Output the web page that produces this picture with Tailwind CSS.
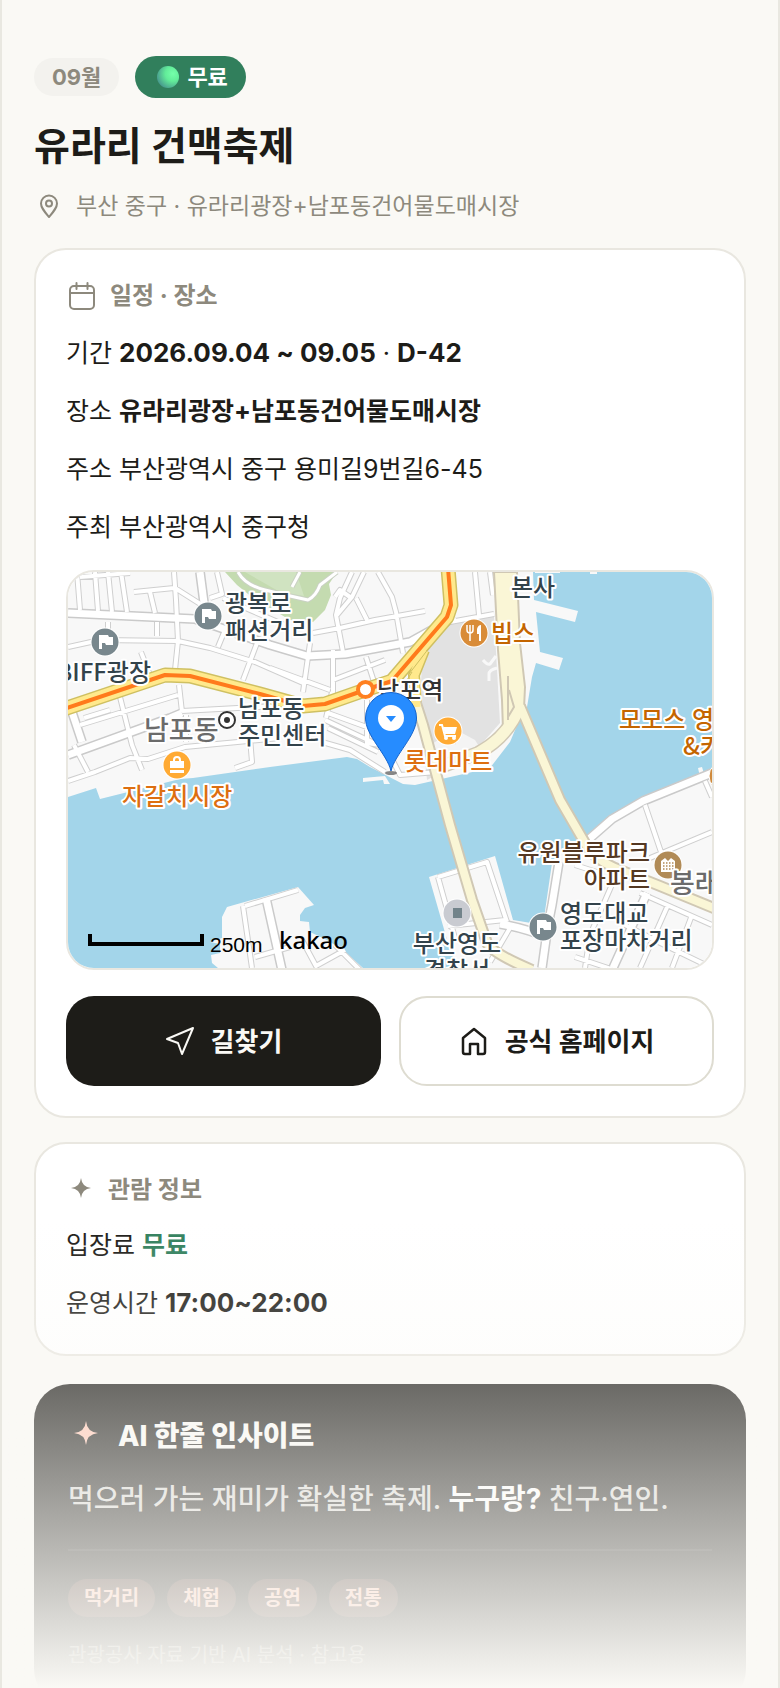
<!DOCTYPE html>
<html lang="ko">
<head>
<meta charset="utf-8">
<meta name="viewport" content="width=device-width, initial-scale=1">
<title>유라리 건맥축제</title>
<script src="https://cdn.jsdelivr.net/npm/@tailwindcss/browser@4"></script>
</head>
<body class="bg-[#faf9f5] font-['Inter','Noto_Sans_CJK_KR',sans-serif] text-[#1d1c18]">
<main class="relative h-screen overflow-hidden border-x-2 border-[#e9e8e1] px-8 pt-14">

  <header>
    <div class="flex items-center gap-4">
      <span class="flex h-[38px] items-center rounded-full bg-[#f3f2ee] px-[18px] text-[22px] font-bold text-[#8d897d]">09월</span>
      <span class="flex h-[42px] items-center gap-2 rounded-full bg-[#317f5c] pr-[18px] pl-[22px] text-[22px] font-bold text-white">
        <svg class="size-[22px]" viewBox="0 0 22 22" aria-hidden="true">
          <defs>
            <radialGradient id="ball" cx="0.72" cy="0.35" r="0.75"><stop offset="0" stop-color="#75ffaa"/><stop offset="0.45" stop-color="#62ec99"/><stop offset="1" stop-color="#489b8e"/></radialGradient>
          </defs>
          <circle cx="11" cy="11" r="11" fill="url(#ball)"/>
        </svg>
        무료
      </span>
    </div>
    <h1 class="mt-[22px] text-[39px] leading-[52px] font-bold">유라리 건맥축제</h1>
    <p class="mt-4 flex items-center gap-[13px] text-[23px] leading-9 text-[#8d897d]">
      <svg class="ml-[3px] size-[26px]" viewBox="0 0 26 26" fill="none" stroke="currentColor" stroke-width="2" aria-hidden="true"><path d="M12 24C7 18 4 14.500 4 10.500a8 8 0 0 1 16 0C20 14.500 17 18 12 24z" stroke-linejoin="round"/><circle cx="12" cy="10.500" r="3"/></svg>
      부산 중구 · 유라리광장+남포동건어물도매시장
    </p>
  </header>

  <section class="mt-6 rounded-[32px] border-2 border-[#e9e7e0] bg-white p-[30px]">
    <h2 class="flex items-center gap-[14px] text-2xl leading-8 font-bold text-[#8d897d]">
      <svg class="size-[30px]" viewBox="0 0 30 30" fill="none" stroke="currentColor" stroke-width="2" stroke-linecap="round" aria-hidden="true"><rect x="4" y="5" width="24" height="23" rx="4"/><path d="M4 12h24M10.500 2v6M21.500 2v6"/></svg>
      일정 · 장소
    </h2>
    <div class="mt-5 flex flex-col gap-4 text-[25px] leading-[42px]">
      <p>기간 <strong class="text-[26px] font-bold">2026.09.04 ~ 09.05</strong> · <strong class="text-[26px] font-bold">D-42</strong></p>
      <p>장소 <strong class="font-bold">유라리광장+남포동건어물도매시장</strong></p>
      <p>주소 부산광역시 중구 용미길9번길6-45</p>
      <p>주최 부산광역시 중구청</p>
    </div>

    <div class="mt-[22px] overflow-hidden rounded-[28px] border-2 border-[#e9e7e0]">
      <svg class="block h-[396px] w-full font-['Noto_Sans_CJK_KR',sans-serif]" viewBox="68 572 644 396" preserveAspectRatio="xMidYMid slice" role="img" aria-label="지도">
        <defs>
          <path id="minor" d="M77 572L80 610M95 572L98 611M108 572L112 612M121 572L127 612M80 577L130 573M134 592L174 588M174 572L176 600L178 641L175 670M179 685L182 712M175 588L205 607M150 592L155 613M157 622V636M68 647L100 640L178 641L210 648L255 662L303 683M217 572L222 594L210 598M223 598L250 610L285 625M225 630L218 647M257 643L243 680M141 652L150 675M108 622V637M80 725L178 695M84 718L110 710M120 697L132 745L142 770M182 711L275 706M74 745L88 772M68 781L95 772L130 758L148 759L185 747L280 738M250 738L252 762L235 768M186 715V742M352 572L340 598L336 615L343 652M378 572L392 597L396 612L403 653M313 633L340 628L375 620L425 611M337 615L352 597L364 572M356 598L367 620M335 597L340 590L350 597M310 643L303 692M270 668L330 690M333 650V695M333 680L385 660M366 657L376 688M325 720L385 748M328 713L375 730M328 728L378 752M322 742L350 750L385 772M332 692L326 718M367 700V743L380 745M385 745L400 775L437 772M475 572L479 615M490 572L493 595M450 622L494 614M645 805L661 852M712 832L650 858M705 781L712 797M575 865L600 873M617 873L590 935L585 968M640 893L712 925M668 905L640 968M692 915L672 968M650 938L712 968M575 957L620 972M625 925L655 940M438 877L487 862L507 922M438 877L455 938M448 926L505 920M510 928L490 962M243 906L252 968M245 906L298 890M255 957L290 947M302 940L316 966L345 950M335 945L360 970"/>
          <path id="medium" d="M68 613L195 619L270 645L307 656L345 654L410 642L455 617M200 572L206 618M68 755L170 718L182 713M72 712L82 742M712 773L643 801L612 819L588 840M559 862L552 905L548 925L542 968M647 893L613 968M500 924Q525 928 548 938M266 898L282 970"/>
          <path id="subway" d="M64 709L165 675L190 676L260 694L303 706L325 704L365 690L392 681L447 617L451 605L448 568"/>
          <path id="bridges" d="M415 700L423 725L450 825L472 900L487 943Q492 953 532 970M520 706L560 800L585 843Q594 860 620 870L660 886L716 909"/>
          <path id="coast" d="M520 706Q508 737 478 753L438 768"/>
          <g id="flag"><circle r="14.500" fill="#fff"/><circle r="13.500" fill="#78878d"/><path d="M-6 7V-7H3L4-5H8V3H1L0 1H-3V7z" fill="#fff"/></g>
        </defs>
        <rect x="68" y="572" width="644" height="396" fill="#f8f8f8"/>
        <path d="M68 797L96 788L100 799L180 779L193 778L270 767L347 757L357 759L370 767L403 784L415 785L437 780L490 768L510 742L518 723L527 707L532 677L536 663L559 670L563 658L540 652L536 612L575 622L578 611L534 600L533 572H712V770L643 797L612 815L588 834L560 850L552 863L543 925L513 920L495 856L429 877L450 950L457 968H68z" fill="#a3d5ea"/>
        <path d="M227 907L298 887L314 905L305 908L300 915V921L309 922L310 932L327 940L343 950L363 968H218L212 963L211 955L220 953V944L210 942L222 938V917zM363 778L385 776L390 784H384L383 780L363 782zM698 768L702 767L705 777H700zM535 572H560V573H535zM590 572H597V574H590z" fill="#f8f8f8"/>
        <path d="M225 572L237 585L253 598L290 620L313 622L325 610L331 595L329 584L337 572z" fill="#c4dbb0"/>
        <path d="M245 572H296L304 596L280 592z" fill="#d0e3c1"/>
        <path d="M453 620L494 616L500 723L470 757L427 780L420 707L422 660L430 640z" fill="#e2e2e2"/>
        <path d="M430 745L440 739L455 738V745L462 733L475 740L480 748L440 768z" fill="#f4f4f4"/>
        <g fill="none" stroke-linejoin="round">
          <use href="#minor" stroke="#cfcfcf" stroke-width="6"/>
          <use href="#medium" stroke="#cacaca" stroke-width="10"/>
          <use href="#minor" stroke="#fff" stroke-width="4"/>
          <use href="#medium" stroke="#fff" stroke-width="7"/>
          <path d="M238 572Q245 585 265 590T308 600Q316 596 320 585L337 572M292 587L300 572" stroke="#cad1c4" stroke-width="5"/>
          <path d="M238 572Q245 585 265 590T308 600Q316 596 320 585L337 572M292 587L300 572" stroke="#fff" stroke-width="3"/>
          <path d="M483 660Q487 665 490 664L496 656M497 668Q489 670 489 674V681" stroke="#f8f8f8" stroke-width="3"/>
          <path d="M424 650L414 675L416 706" stroke="#cfc062" stroke-width="12"/>
          <use href="#coast" stroke="#d0c8b4" stroke-width="14"/>
          <use href="#bridges" stroke="#d0c8b4" stroke-width="12"/>
          <path d="M494 572H517L520 643L525 687L524 709L503 730L502 700L498 650z" fill="#faf6d6" stroke="#d0c8b4" stroke-width="2"/>
          <use href="#coast" stroke="#faf6d6" stroke-width="11"/>
          <use href="#bridges" stroke="#faf6d6" stroke-width="8"/>
          <path d="M508 676V720M509 690L514 707L508 717" stroke="#d0c8b4" stroke-width="2"/>
          <use href="#subway" stroke="#cfc062" stroke-width="15"/>
          <path d="M424 650L414 675L416 707" stroke="#ffe98c" stroke-width="9"/>
          <use href="#subway" stroke="#ffe98c" stroke-width="12"/>
          <path d="M429 648L409 674M412 672L407 680" stroke="#cfc062" stroke-width="1"/>
          <use href="#subway" stroke="#ff7a1c" stroke-width="4"/>
        </g>
        <circle cx="365.500" cy="689.500" r="7.500" fill="#fff" stroke="#ff8020" stroke-width="4"/>

        <use href="#flag" x="208" y="616"/>
        <use href="#flag" x="105" y="642"/>
        <use href="#flag" x="543" y="927"/>
        <g transform="translate(177 765)"><circle r="14.500" fill="#fff"/><circle r="13.500" fill="#ffaa33"/><path d="M-7-4H7V3H-7zM-7 5H7V8H-7z" fill="#fff"/><path d="M-3-3V-5a3 3 0 0 1 6 0V-3" fill="none" stroke="#fff" stroke-width="2"/></g>
        <g transform="translate(448 731)"><circle r="14.500" fill="#fff"/><circle r="13.500" fill="#ffaa33"/><path d="M-5-4H9L7 3H-3z" fill="#fff"/><path d="M-9-6H-6L-3 5H8" fill="none" stroke="#fff" stroke-width="2"/><circle cx="-2" cy="7" r="2" fill="#fff"/><circle cx="6" cy="7" r="2" fill="#fff"/></g>
        <g transform="translate(474 633)"><circle r="14.500" fill="#fff"/><circle r="13.500" fill="#d98c38"/><path d="M-7-8V-3a3 3 0 0 0 3 3a3 3 0 0 0 3-3V-8M-4-8V8" fill="none" stroke="#fff" stroke-width="1.500"/><path d="M7 8H5V1H3V-4Q4-8 7-8z" fill="#fff"/></g>
        <g transform="translate(668 865)"><circle r="14.500" fill="#fff"/><circle r="13.500" fill="#b18b57"/><path d="M-7 7V-4L-3-7L0-4L3-7L7-4V7z" fill="#fff"/><path d="M-5-2H6M-5 1H6M-5 4H6" stroke="#b18b57" stroke-width="1.500" stroke-dasharray="1.500 1.500"/></g>
        <g transform="translate(457 913)"><circle r="14.500" fill="#fff"/><circle r="13.500" fill="#c9cbd1"/><path d="M-4-5H5V5H-4z" fill="#72838a"/></g>
        <circle cx="723" cy="776" r="14" fill="#d08a3c" stroke="#fff"/>

        <g font-size="24" font-weight="500" stroke="#fff" stroke-width="4" stroke-linejoin="round" paint-order="stroke" fill="#33434b">
          <g fill="#6b6b6b" font-size="27" font-weight="500"><text x="144" y="740">남포동</text><text x="670" y="893">봉래동</text></g>
          <text x="225" y="612">광복로</text><text x="225" y="639">패션거리</text>
          <text x="151" y="681" text-anchor="end">BIFF광장</text>
          <text x="238" y="717">남포동</text><text x="238" y="744">주민센터</text>
          <text x="377" y="699" fill="#333">남포역</text>
          <text x="511" y="596">본사</text>
          <text x="560" y="922">영도대교</text><text x="560" y="949">포장마차거리</text>
          <text x="457" y="952" text-anchor="middle">부산영도</text><text x="457" y="979" text-anchor="middle">경찰서</text>
          <g fill="#dd6f11"><text x="122" y="805">자갈치시장</text><text x="404" y="770">롯데마트</text></g>
          <g fill="#c46500"><text x="491" y="642">빕스</text><text x="619" y="728">모모스 영도</text><text x="683" y="755">&amp;카페</text></g>
          <g fill="#543822" text-anchor="end"><text x="650" y="861">유원블루파크</text><text x="650" y="888">아파트</text></g>
        </g>
        <circle cx="227" cy="720" r="8" fill="#fff" stroke="#333" stroke-width="2"/><circle cx="227" cy="720" r="3" fill="#333"/>

        <ellipse cx="391" cy="773" rx="6" ry="2" fill="#555" opacity="0.700"/>
        <path d="M391 771C387 754 365.500 736 365.500 718a25.500 25.500 0 0 1 51 0C416.500 736 395 754 391 771z" fill="#268cff" stroke="#1464cc"/>
        <circle cx="391" cy="718" r="13" fill="#fff"/><path d="M386 716H396L391 722z" fill="#268cff"/>

        <path d="M90 934V944H202V934" fill="none" stroke="#000" stroke-width="4"/>
        <text x="210" y="952" font-size="21" font-family="Liberation Sans, sans-serif">250m</text>
        <text x="279" y="949" font-size="24" font-weight="500" font-family="Noto Sans, sans-serif">kakao</text>
      </svg>
    </div>

    <div class="mt-[26px] grid grid-cols-2 gap-[18px]">
      <button type="button" class="flex h-[90px] items-center justify-center gap-4 rounded-[28px] bg-[#1d1c18] text-[26px] font-bold text-[#faf9f5]">
        <svg class="size-[30px]" viewBox="0 0 30 30" fill="none" stroke="currentColor" stroke-width="2" stroke-linejoin="round" aria-hidden="true"><path d="M28 2L17 28L13 17L2 13z"/></svg>
        길찾기
      </button>
      <a href="#" class="flex h-[90px] items-center justify-center gap-4 rounded-[28px] border-2 border-[#dedcd1] bg-white text-[26px] font-bold">
        <svg class="size-[30px]" viewBox="0 0 30 30" fill="none" stroke="currentColor" stroke-width="2.500" stroke-linejoin="round" aria-hidden="true"><path d="M4 12L15 3L26 12V26Q26 28 24 28H19V18H11V28H6Q4 28 4 26z"/></svg>
        공식 홈페이지
      </a>
    </div>
  </section>

  <section class="mt-6 rounded-[32px] border-2 border-[#e9e7e0] bg-white p-[30px]">
    <h2 class="flex items-center gap-3 text-2xl leading-8 font-bold text-[#8d897d]">
      <svg class="size-[30px]" viewBox="0 0 30 30" fill="currentColor" aria-hidden="true"><path d="M15 3Q16 12 25 13Q16 14 15 23Q14 14 5 13Q14 12 15 3z"/></svg>
      관람 정보
    </h2>
    <div class="mt-[18px] flex flex-col gap-4 text-[25px] leading-[42px]">
      <p>입장료 <strong class="font-bold text-[#317f5c]">무료</strong></p>
      <p>운영시간 <strong class="text-[26px] font-bold">17:00~22:00</strong></p>
    </div>
  </section>

  <section class="mt-7 rounded-[36px] bg-[#1d1c18] p-[34px] text-[#faf9f5]">
    <h2 class="flex items-center gap-[14px] text-[28px] leading-9 font-extrabold">
      <svg class="size-9" viewBox="0 0 36 36" fill="#ffc5b2" aria-hidden="true"><path d="M18 3Q19 14 30 15Q19 16 18 27Q17 16 6 15Q17 14 18 3z"/></svg>
      AI 한줄 인사이트
    </h2>
    <p class="mt-[23px] text-[28px] leading-[44px] font-medium text-[#faf9f5]/85">먹으러 가는 재미가 확실한 축제. <strong class="font-bold text-white">누구랑?</strong> 친구·연인.</p>
    <div class="mt-7 border-t-2 border-white/8 pt-7">
      <ul class="flex gap-3 text-xl font-bold text-[#ffc5b2]">
        <li class="flex h-[38px] items-center rounded-full bg-[#ff9880]/20 px-4">먹거리</li>
        <li class="flex h-[38px] items-center rounded-full bg-[#ff9880]/20 px-4">체험</li>
        <li class="flex h-[38px] items-center rounded-full bg-[#ff9880]/20 px-4">공연</li>
        <li class="flex h-[38px] items-center rounded-full bg-[#ff9880]/20 px-4">전통</li>
      </ul>
      <p class="mt-[22px] text-xl leading-8 text-[#faf9f5]/50">관광공사 자료 기반 AI 분석 · 참고용</p>
    </div>
  </section>

  <div class="pointer-events-none absolute -inset-x-0.5 bottom-0 h-[468px] bg-linear-to-b from-[#faf9f5]/0 to-[#faf9f5]"></div>
</main>
</body>
</html>
